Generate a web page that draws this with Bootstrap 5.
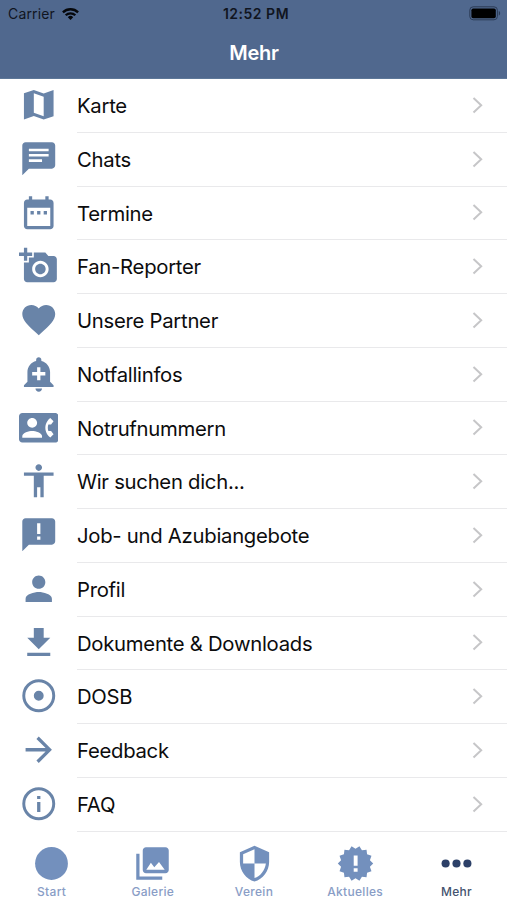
<!DOCTYPE html>
<html lang="de">
<head>
<meta charset="utf-8">
<meta name="viewport" content="width=device-width, initial-scale=1">
<title>Mehr</title>
<link href="https://cdn.jsdelivr.net/npm/bootstrap@5.3.0/dist/css/bootstrap.min.css" rel="stylesheet">
<style>
  body { font-family: Inter, "Liberation Sans", sans-serif; color: #0c0c0d; height: 900px; overflow: hidden; background: #fff; }
  .top-area { background: #50688e; height: 79px; border-bottom: 1px solid #5d7798; }
  .status-line { height: 27px; padding: 0 6px 0 8px; font-size: 14px; line-height: 27px; color: #10151f; letter-spacing: .15px; }
  .status-line > * { flex: 1 1 0; }
  .clock { font-weight: 600; letter-spacing: .5px; padding-left: 3px; white-space: nowrap; }
  .screen-title { height: 51px; line-height: 52px; font-size: 20px; font-weight: 600; color: #fff; letter-spacing: -.2px; padding-left: 1px; }
  .menu-row { height: 53.75px; color: inherit; }
  .menu-icon { width: 77px; padding-bottom: 2px; color: #6984a8; }
  .menu-icon svg { width: 39.5px; height: 39.5px; fill: currentColor; }
  .menu-body { border-bottom: 1px solid #e9e9eb; padding: 2px 24px 0 0; font-size: 20.3px; letter-spacing: -.27px; }
  .chev { width: 11px; height: 17px; fill: none; stroke: #c6c6c8; stroke-width: 2; margin-bottom: 2px; }
  .tab-line { height: 68px; padding-left: 1px; }
  .tab-entry { flex: 1 1 0; color: #7390bd; font-size: 12px; font-weight: 500; line-height: 14px; padding-top: 12px; letter-spacing: .3px; }
  .tab-entry span { color: #899dc6; }
  .tab-entry svg { width: 39px; height: 39px; fill: currentColor; margin-bottom: 2px; }
  .tab-entry.current { color: #2c4068; }
  .tab-entry.current span { color: #44536f; }
</style>
</head>
<body>
<header class="top-area">
  <div class="status-line d-flex align-items-center">
    <div class="d-flex align-items-center"><span>Carrier</span>
      <svg style="margin-left:7px" width="17" height="12" viewBox="0 0 17 12" fill="none" stroke="#05070b" stroke-width="2.3"><path d="M.9 4.4a10.8 10.8 0 0 1 15.2 0M3.7 7.3a6.8 6.8 0 0 1 9.6 0"/><path d="M8.5 12L5.8 9.2a3.8 3.8 0 0 1 5.4 0z" fill="#05070b" stroke="none"/></svg>
    </div>
    <div class="clock text-center">12:52 PM</div>
    <div class="d-flex justify-content-end">
      <svg width="32" height="15" viewBox="0 0 32 15"><rect x=".8" y=".8" width="27.6" height="13" rx="3.4" fill="none" stroke="#2b3b56" stroke-width="1"/><rect x="2.4" y="2.4" width="24.4" height="9.8" rx="1.8"/><path d="M29.8 5v4.6c1.8-.7 1.8-3.9 0-4.6z" fill="#2b3b56"/></svg>
    </div>
  </div>
  <div class="screen-title text-center">Mehr</div>
</header>

<main id="menu"></main>

<nav class="tab-line d-flex">
  <div class="tab-entry d-flex flex-column align-items-center"><svg viewBox="0 0 24 24"><circle cx="12" cy="12" r="10.1"/></svg><span>Start</span></div>
  <div class="tab-entry d-flex flex-column align-items-center"><svg viewBox="0 0 24 24"><path fill-rule="evenodd" d="M22 16V4c0-1.1-.9-2-2-2H8c-1.1 0-2 .9-2 2v12c0 1.1.9 2 2 2h12c1.1 0 2-.9 2-2zM8.2 15.8L11 11.6l2.1 2.7L16 11l3.5 4.8zM2 6v16h16v-2H4V6z"/></svg><span>Galerie</span></div>
  <div class="tab-entry d-flex flex-column align-items-center"><svg viewBox="0 0 24 24"><path d="M12 1L3 5v6c0 5.55 3.84 10.74 9 12 5.16-1.26 9-6.45 9-12V5l-9-4zm0 10.99h7c-.53 4.12-3.28 7.79-7 8.94V12H5V6.3l7-3.11v8.8z"/></svg><span>Verein</span></div>
  <div class="tab-entry d-flex flex-column align-items-center"><svg viewBox="0 0 24 24"><path id="burst" fill-rule="evenodd"/></svg><span>Aktuelles</span></div>
  <div class="tab-entry current d-flex flex-column align-items-center"><svg viewBox="0 0 24 24"><circle cx="5.3" cy="12" r="2.5"/><circle cx="12" cy="12" r="2.5"/><circle cx="18.7" cy="12" r="2.5"/></svg><span>Mehr</span></div>
</nav>

<script src="https://cdn.jsdelivr.net/npm/bootstrap@5.3.0/dist/js/bootstrap.bundle.min.js"></script>
<script>
const entries = [
  ["Karte", "M21 3l-6 2.1L9 3 3 5v16l6-2.1 6 2.1 6-2zM15 19l-6-2.11V5l6 2.11z"],
  ["Chats", "M20 2H4c-1.1 0-2 .9-2 2v18l4-4h14c1.1 0 2-.9 2-2V4c0-1.1-.9-2-2-2zM6 9.1h12v1.6H6zm8 4.8H6v-1.6h8zm4-6.4H6V5.9h12z"],
  ["Termine", "M9 11H7v2h2v-2zm4 0h-2v2h2v-2zm4 0h-2v2h2v-2zm2-7h-1V2h-2v2H8V2H6v2H5c-1.11 0-2 .9-2 2v14c0 1.1.89 2 2 2h14c1.1 0 2-.9 2-2V6c0-1.1-.9-2-2-2zm0 16H5V9h14v11z"],
  ["Fan-Reporter", "M3 4V1h2v3h3v2H5v3H3V6H0V4h3zm3 6V7h3V4h7l1.83 2H21c1.1 0 2 .9 2 2v12c0 1.1-.9 2-2 2H5c-1.1 0-2-.9-2-2V10h3zm7 9c2.76 0 5-2.24 5-5s-2.24-5-5-5-5 2.24-5 5 2.24 5 5 5zm-3.2-5c0 1.77 1.43 3.2 3.2 3.2s3.2-1.43 3.2-3.2-1.43-3.2-3.2-3.2-3.2 1.43-3.2 3.2z"],
  ["Unsere Partner", "M12 21.35l-1.45-1.32C5.4 15.36 2 12.28 2 8.5 2 5.42 4.42 3 7.5 3c1.74 0 3.41.81 4.5 2.09C13.09 3.81 14.76 3 16.5 3 19.58 3 22 5.42 22 8.5c0 3.78-3.4 6.86-8.55 11.54L12 21.35z"],
  ["Notfallinfos", "M10.01 21.01c0 1.1.89 1.99 1.99 1.99s1.99-.89 1.99-1.99h-3.98zm8.87-4.19V11c0-3.25-2.25-5.97-5.29-6.69v-.72C13.59 2.71 12.88 2 12 2s-1.59.71-1.59 1.59v.72C7.37 5.03 5.12 7.75 5.12 11v5.82L3 18.94V20h18v-1.06l-2.12-2.12zM16 13.01h-3v3h-2v-3H8V11h3V8h2v3h3v2.01z"],
  ["Notrufnummern", "M22 3H2C.9 3 0 3.9 0 5v14c0 1.1.9 2 2 2h20c1.1 0 1.99-.9 1.99-2L24 5c0-1.1-.9-2-2-2zM8 6c1.66 0 3 1.34 3 3s-1.34 3-3 3-3-1.34-3-3 1.34-3 3-3zm6 12H2v-1c0-2 4-3.1 6-3.1s6 1.1 6 3.1v1zm3.85-4h1.64L21 16l-1.99 1.99c-1.31-.98-2.28-2.38-2.73-3.99-.18-.64-.28-1.31-.28-2s.1-1.36.28-2c.45-1.62 1.42-3.01 2.73-3.99L21 8l-1.51 2h-1.64c-.22.63-.35 1.3-.35 2s.13 1.37.35 2z"],
  ["Wir suchen dich...", "M12 2c1.1 0 2 .9 2 2s-.9 2-2 2-2-.9-2-2 .9-2 2-2zm9 7h-6v13h-2v-6h-2v6H9V9H3V7h18v2z"],
  ["Job- und Azubiangebote", "M20 2H4c-1.1 0-2 .9-2 2v18l4-4h14c1.1 0 2-.9 2-2V4c0-1.1-.9-2-2-2zm-7 13h-2v-2h2zm0-3.4h-2V5h2z"],
  ["Profil", "M12 12c2.21 0 4-1.79 4-4s-1.79-4-4-4-4 1.79-4 4 1.79 4 4 4zm0 2c-2.67 0-8 1.34-8 4v2h16v-2c0-2.66-5.33-4-8-4z"],
  ["Dokumente & Downloads", "M19 9h-4V3H9v6H5l7 7 7-7zM5 18v2h14v-2H5z"],
  ["DOSB", "M12 2a10 10 0 1 0 0 20a10 10 0 1 0 0-20zm0 18.2a8.2 8.2 0 1 1 0-16.4a8.2 8.2 0 1 1 0 16.4zM12 9a3 3 0 1 0 0 6a3 3 0 1 0 0-6z"],
  ["Feedback", "M12 4l-1.41 1.41L16.17 11H4v2h12.17l-5.58 5.59L12 20l8-8z"],
  ["FAQ", "M11 17h2v-6h-2zM12 2a10 10 0 1 0 0 20a10 10 0 1 0 0-20zm0 18.2a8.2 8.2 0 1 1 0-16.4a8.2 8.2 0 1 1 0 16.4zM11 9.1h2V7.3h-2z"]
];
const menu = document.getElementById("menu");
for (const [label, path] of entries) {
  menu.insertAdjacentHTML("beforeend",
    `<a class="menu-row d-flex text-decoration-none">
      <div class="menu-icon d-flex align-items-center justify-content-center flex-shrink-0"><svg viewBox="0 0 24 24"><path d="${path}"/></svg></div>
      <div class="menu-body d-flex align-items-center justify-content-between flex-grow-1"><span class="text-nowrap">${label.replace("&", "&amp;")}</span><svg class="chev" viewBox="0 0 11 17"><path d="M1.5 1l7.7 7.3-7.7 7.3"/></svg></div>
    </a>`);
}

// Badge with 14 teeth and an exclamation mark cut out
const teeth = 14, points = [];
for (let i = 0; i < teeth * 2; i++) {
  const r = i % 2 ? 9.1 : 10.9, a = Math.PI * i / teeth;
  points.push((12 + r * Math.cos(a)).toFixed(2) + " " + (12 + r * Math.sin(a)).toFixed(2));
}
document.getElementById("burst").setAttribute("d",
  "M" + points.join("L") + "zM10.9 7h2.4v6.4h-2.4zM10.9 14.9h2.4v2.1h-2.4z");
</script>
</body>
</html>
